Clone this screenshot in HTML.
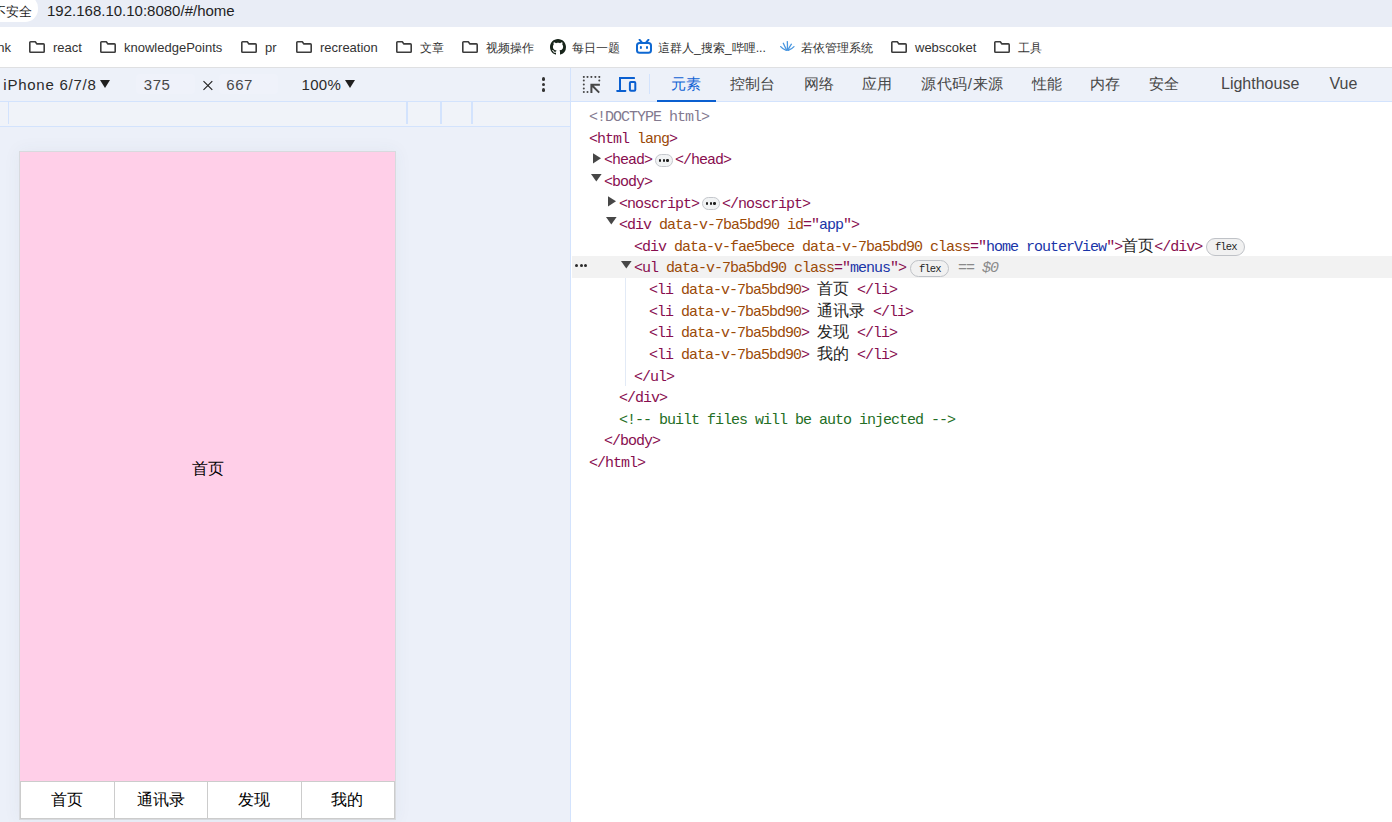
<!DOCTYPE html>
<html><head><meta charset="utf-8">
<style>
*{margin:0;padding:0;box-sizing:border-box}
html,body{width:1392px;height:822px;overflow:hidden;background:#fff;font-family:"Liberation Sans",sans-serif;color:#1f1f1f}
.a{position:absolute;white-space:pre}
#omni{position:absolute;left:0;top:0;width:1392px;height:27px;background:#e9edf6}
#pill{position:absolute;left:-30px;top:-5px;width:67.5px;height:26.5px;border-radius:13px;background:#fff}
#bm{position:absolute;left:0;top:27px;width:1392px;height:41px;background:#fff;border-bottom:1px solid #dfe0e2}
.bt{position:absolute;top:11px;font-size:13px;line-height:20px;color:#333}
.bt .cj{font-size:12.3px}
#dtb{position:absolute;left:0;top:68px;width:570px;height:34px;background:#edf1f9;border-bottom:1px solid #d3e3fd}
#ruler{position:absolute;left:0;top:102px;width:570px;height:25px;background:#f0f3f9;border-bottom:1px solid #d3e3fd}
#canvas{position:absolute;left:0;top:127px;width:570px;height:695px;background:#ecf0f9;overflow:hidden}
#vsplit{position:absolute;left:570px;top:68px;width:1px;height:754px;background:#d3e3fd}
#tabs{position:absolute;left:571px;top:68px;width:821px;height:34px;background:#edf1f9;border-bottom:1px solid #d3e3fd}
.tab{position:absolute;top:5.6px;font-size:15px;line-height:20px;color:#474747}
#code{position:absolute;left:571px;top:102px;width:821px;height:720px;background:#fff}
.ln{position:absolute;height:21.625px;line-height:21.625px;font-family:"Liberation Mono",monospace;font-size:15px;letter-spacing:-1px;white-space:pre;color:#880e4f}
.ln .cj{letter-spacing:0;font-size:16px}
.an{color:#9b4a08}.av{color:#1a35a8}.cm{color:#236e25}.tx{color:#1f1f1f}
.dt{color:#83798f}
.tri{position:absolute;width:0;height:0}
.badge{position:absolute;width:38.5px;height:17.5px;border:1px solid #bfc2c7;border-radius:9px;background:#f1f1f1;font-family:"Liberation Mono",monospace;font-size:10.5px;letter-spacing:-0.9px;text-indent:1px;line-height:16px;color:#1f1f1f;text-align:center}
.dtt{top:7px;font-size:15px;line-height:20px;color:#2a2a2a}
.rl{top:0;width:1.6px;height:21.7px;background:#d3e3fd}
.nav{top:663px;font-size:16px;line-height:20px;color:#000}
.ell{position:absolute;width:18px;height:12.8px;border:1px solid #c4c7cc;border-radius:6.4px;background:#f1f3f4;font-size:0;line-height:0;padding:4.2px 0 0 3.1px}
.ell i{display:inline-block;width:2.4px;height:2.4px;border-radius:1.2px;background:#1f1f1f;margin-right:1.3px;vertical-align:top}
.dot{display:inline-block;width:3px;height:3px;border-radius:1.5px;background:#2a2a2a;margin-right:1.5px;vertical-align:top}
.eq{color:#8a8a8a;font-style:italic}
</style></head><body>
<div id="omni"><div id="pill"></div>
<div class="a" style="left:-7px;top:3px;font-size:12.5px;line-height:18px;color:#1f1f1f">不安全</div>
<div class="a" style="left:47px;top:1.5px;font-size:15px;line-height:18px;color:#1f1f1f">192.168.10.10:8080/#/home</div>
</div>
<div id="bm">
<div class="a bt" style="left:-8.5px">link</div>
<svg class="a" style="left:29px;top:14px" width="16" height="12" viewBox="0 0 16 12"><path d="M0.8 1.6Q0.8 0.8 1.6 0.8H6.3L7.9 2.9H14.4Q15.2 2.9 15.2 3.7V10.4Q15.2 11.2 14.4 11.2H1.6Q0.8 11.2 0.8 10.4Z" fill="none" stroke="#3c3c3c" stroke-width="1.6" stroke-linejoin="round"/></svg>
<div class="a bt" style="left:53px">react</div>
<svg class="a" style="left:100px;top:14px" width="16" height="12" viewBox="0 0 16 12"><path d="M0.8 1.6Q0.8 0.8 1.6 0.8H6.3L7.9 2.9H14.4Q15.2 2.9 15.2 3.7V10.4Q15.2 11.2 14.4 11.2H1.6Q0.8 11.2 0.8 10.4Z" fill="none" stroke="#3c3c3c" stroke-width="1.6" stroke-linejoin="round"/></svg>
<div class="a bt" style="left:124px">knowledgePoints</div>
<svg class="a" style="left:241px;top:14px" width="16" height="12" viewBox="0 0 16 12"><path d="M0.8 1.6Q0.8 0.8 1.6 0.8H6.3L7.9 2.9H14.4Q15.2 2.9 15.2 3.7V10.4Q15.2 11.2 14.4 11.2H1.6Q0.8 11.2 0.8 10.4Z" fill="none" stroke="#3c3c3c" stroke-width="1.6" stroke-linejoin="round"/></svg>
<div class="a bt" style="left:265px">pr</div>
<svg class="a" style="left:296px;top:14px" width="16" height="12" viewBox="0 0 16 12"><path d="M0.8 1.6Q0.8 0.8 1.6 0.8H6.3L7.9 2.9H14.4Q15.2 2.9 15.2 3.7V10.4Q15.2 11.2 14.4 11.2H1.6Q0.8 11.2 0.8 10.4Z" fill="none" stroke="#3c3c3c" stroke-width="1.6" stroke-linejoin="round"/></svg>
<div class="a bt" style="left:320px">recreation</div>
<svg class="a" style="left:396px;top:14px" width="16" height="12" viewBox="0 0 16 12"><path d="M0.8 1.6Q0.8 0.8 1.6 0.8H6.3L7.9 2.9H14.4Q15.2 2.9 15.2 3.7V10.4Q15.2 11.2 14.4 11.2H1.6Q0.8 11.2 0.8 10.4Z" fill="none" stroke="#3c3c3c" stroke-width="1.6" stroke-linejoin="round"/></svg>
<div class="a bt" style="left:420px"><span class=cj>文章</span></div>
<svg class="a" style="left:462px;top:14px" width="16" height="12" viewBox="0 0 16 12"><path d="M0.8 1.6Q0.8 0.8 1.6 0.8H6.3L7.9 2.9H14.4Q15.2 2.9 15.2 3.7V10.4Q15.2 11.2 14.4 11.2H1.6Q0.8 11.2 0.8 10.4Z" fill="none" stroke="#3c3c3c" stroke-width="1.6" stroke-linejoin="round"/></svg>
<div class="a bt" style="left:486px"><span class=cj>视频操作</span></div>
<svg class="a" style="left:891px;top:14px" width="16" height="12" viewBox="0 0 16 12"><path d="M0.8 1.6Q0.8 0.8 1.6 0.8H6.3L7.9 2.9H14.4Q15.2 2.9 15.2 3.7V10.4Q15.2 11.2 14.4 11.2H1.6Q0.8 11.2 0.8 10.4Z" fill="none" stroke="#3c3c3c" stroke-width="1.6" stroke-linejoin="round"/></svg>
<div class="a bt" style="left:915px">webscoket</div>
<svg class="a" style="left:994px;top:14px" width="16" height="12" viewBox="0 0 16 12"><path d="M0.8 1.6Q0.8 0.8 1.6 0.8H6.3L7.9 2.9H14.4Q15.2 2.9 15.2 3.7V10.4Q15.2 11.2 14.4 11.2H1.6Q0.8 11.2 0.8 10.4Z" fill="none" stroke="#3c3c3c" stroke-width="1.6" stroke-linejoin="round"/></svg>
<div class="a bt" style="left:1018px"><span class=cj>工具</span></div>
<svg class="a" style="left:550px;top:12px" width="16" height="16" viewBox="0 0 16 16"><path fill="#17241a" d="M8 0C3.58 0 0 3.58 0 8c0 3.54 2.29 6.53 5.47 7.59.4.07.55-.17.55-.38 0-.19-.01-.82-.01-1.49-2.01.37-2.53-.49-2.69-.94-.09-.23-.48-.94-.82-1.130-.28-.15-.68-.52-.01-.53.63-.01 1.08.58 1.23.82.72 1.21 1.87.87 2.33.66.07-.52.28-.87.51-1.07-1.780-.2-3.64-.89-3.64-3.95 0-.87.31-1.59.82-2.15-.08-.2-.36-1.02.08-2.12 0 0 .67-.21 2.2.82.64-.18 1.32-.27 2-.27.68 0 1.36.09 2 .27 1.53-1.04 2.2-.82 2.2-.82.44 1.1.16 1.92.08 2.12.51.56.82 1.27.82 2.15 0 3.07-1.87 3.75-3.65 3.95.29.25.54.73.54 1.48 0 1.07-.01 1.93-.01 2.2 0 .21.15.46.55.38A8.013 8.013 0 0016 8c0-4.42-3.58-8-8-8z"/></svg>
<div class="a bt" style="left:572px"><span class=cj>每日一题</span></div>
<svg class="a" style="left:636px;top:12px" width="16" height="16" viewBox="0 0 16 16"><g fill="none" stroke="#0e68d2" stroke-width="2" stroke-linecap="round"><rect x="1" y="4" width="14" height="9.8" rx="2.6"/><path d="M3.6 0.8L5.6 3.2M12.4 0.8L10.4 3.2"/></g><g fill="#0e68d2"><rect x="3.9" y="7" width="2" height="3" rx="1"/><rect x="10" y="7" width="2" height="3" rx="1"/></g></svg>
<div class="a bt" style="left:658px"><span class=cj>這群人_搜索_哔哩...</span></div>
<svg class="a" style="left:780px;top:14px" width="15" height="10" viewBox="0 0 15 10"><g fill="none" stroke="#4a97e0" stroke-width="1.3" stroke-linecap="round"><path d="M7.3 9.2Q7.6 4 7.3 0.6"/><path d="M6.6 9Q5 6 3.3 2.3"/><path d="M8 9Q9.5 6 11.4 3.2"/><path d="M6.3 9.4Q3 8.4 0.7 5.6"/><path d="M8.3 9.4Q11.5 8.2 14 5.6"/></g></svg>
<div class="a bt" style="left:801px"><span class=cj>若依管理系统</span></div>
</div>
<div id="dtb">
<div class="a dtt" style="left:3.3px;letter-spacing:0.75px">iPhone 6/7/8</div>
<svg class="a" style="left:100px;top:12px" width="10" height="8" viewBox="0 0 10 8"><path d="M0 0H10L5 8Z" fill="#1f1f1f"/></svg>
<div class="a" style="left:136px;top:6px;width:59px;height:20px;border-radius:4px;background:#eff2fa"></div>
<div class="a" style="left:219px;top:6px;width:59px;height:20px;border-radius:4px;background:#eff2fa"></div>
<div class="a dtt" style="left:143.8px;color:#474747;letter-spacing:0.5px">375</div>
<svg class="a" style="left:202px;top:12px" width="12" height="11" viewBox="0 0 12 11"><path d="M1.5 1.2L10.3 9.8M10.3 1.2L1.5 9.8" stroke="#1f1f1f" stroke-width="1.15"/></svg>
<div class="a dtt" style="left:226.3px;color:#474747;letter-spacing:0.5px">667</div>
<div class="a dtt" style="left:301.5px;letter-spacing:0.3px">100%</div>
<svg class="a" style="left:345px;top:12px" width="10" height="8" viewBox="0 0 10 8"><path d="M0 0H10L5 8Z" fill="#1f1f1f"/></svg>
<div class="a" style="left:541.7px;top:9px;width:3.6px;height:3.6px;border-radius:2px;background:#333"></div>
<div class="a" style="left:541.7px;top:14.6px;width:3.6px;height:3.6px;border-radius:2px;background:#333"></div>
<div class="a" style="left:541.7px;top:20.3px;width:3.6px;height:3.6px;border-radius:2px;background:#333"></div>
</div>
<div id="ruler">
<div class="a rl" style="left:7.8px"></div>
<div class="a rl" style="left:406.2px"></div>
<div class="a rl" style="left:440.2px"></div>
<div class="a rl" style="left:471.2px"></div>
</div>
<div id="canvas">
<div class="a" style="left:19px;top:24px;width:377px;height:669px;background:#d8dade;box-shadow:0 0 16px 1px rgba(60,70,90,0.05)"></div>
<div class="a" style="left:20px;top:25px;width:375px;height:667px;background:#ffcfe8"></div>
<div class="a" style="left:191.5px;top:332px;font-size:16px;line-height:20px;color:#000">首页</div>
<div class="a" style="left:20px;top:654px;width:375px;height:38px;background:#fff;border:1px solid #ccc"></div>
<div class="a" style="left:114px;top:655px;width:1px;height:36px;background:#ccc"></div>
<div class="a" style="left:207px;top:655px;width:1px;height:36px;background:#ccc"></div>
<div class="a" style="left:301px;top:655px;width:1px;height:36px;background:#ccc"></div>
<div class="a nav" style="left:51px">首页</div>
<div class="a nav" style="left:137px">通讯录</div>
<div class="a nav" style="left:238px">发现</div>
<div class="a nav" style="left:331px">我的</div>
</div>
<div id="vsplit"></div>
<div id="tabs">
<svg class="a" style="left:11px;top:8px" width="20" height="18" viewBox="0 0 20 18"><g fill="#474747"><circle cx="1.8" cy="0.9" r="1"/><circle cx="5.5" cy="0.9" r="1"/><circle cx="9.4" cy="0.9" r="1"/><circle cx="13.4" cy="0.9" r="1"/><circle cx="17.3" cy="0.9" r="1"/><circle cx="17.3" cy="4.5" r="1"/><circle cx="1.8" cy="4.5" r="1"/><circle cx="1.8" cy="8.4" r="1"/><circle cx="1.8" cy="12.4" r="1"/><circle cx="1.8" cy="16.1" r="1"/><circle cx="5.5" cy="16.1" r="1"/></g><path d="M8.4 7.8H17.9V9.8H11.8L17.9 15.9L16.5 17.3L10.4 11.2V17H8.4Z" fill="#474747"/></svg>
<svg class="a" style="left:45px;top:8px" width="22" height="17" viewBox="0 0 22 17"><g fill="#0a5fd0"><rect x="3" y="1" width="16" height="2" rx="0.4"/><rect x="3" y="1" width="2" height="14"/><rect x="0.2" y="14" width="10.2" height="1.9" rx="0.8"/></g><rect x="13.9" y="5.9" width="5.4" height="8.9" rx="1" fill="none" stroke="#0a5fd0" stroke-width="2"/></svg>
<div class="a" style="left:78px;top:6.3px;width:1px;height:19.3px;background:#d3e3fd"></div>
<div class="a tab" style="left:100px;color:#1062d4">元素</div>
<div class="a" style="left:86px;top:32px;width:59px;height:2px;background:#0a5fd0"></div>
<div class="a tab" style="left:159px">控制台</div>
<div class="a tab" style="left:233px">网络</div>
<div class="a tab" style="left:291px">应用</div>
<div class="a tab" style="left:350px;letter-spacing:0.6px">源代码/来源</div>
<div class="a tab" style="left:461px">性能</div>
<div class="a tab" style="left:519px">内存</div>
<div class="a tab" style="left:578px">安全</div>
<div class="a tab" style="left:650px;font-size:16px;top:6px">Lighthouse</div>
<div class="a tab" style="left:758.5px;font-size:16px;top:6px">Vue</div>
</div>
<div id="code">
<div class="a" style="left:1px;top:154px;width:820px;height:21.6px;background:#f2f2f2"></div>
<div class="a" style="left:4px;top:162.4px;font-size:0;line-height:0"><i class="dot"></i><i class="dot"></i><i class="dot"></i></div>
<div class="a" style="left:54px;top:176px;width:1px;height:108px;background:#e2eaf6"></div>
<div class="ln" style="left:18px;top:5.100px"><span class=dt>&lt;!DOCTYPE html&gt;</span></div>
<div class="ln" style="left:18px;top:26.725px">&lt;html<span class=an> lang</span>&gt;</div>
<svg class="a" style="left:22.0px;top:50.85px" width="8" height="11" viewBox="0 0 8 11"><path d="M0 0.2L8 5.3L0 10.6Z" fill="#474747"/></svg>
<div class="ln" style="left:33px;top:48.350px">&lt;head&gt;</div>
<div class="ell" style="left:84px;top:51.95px"><i></i><i></i><i></i></div>
<div class="ln" style="left:104px;top:48.350px">&lt;/head&gt;</div>
<svg class="a" style="left:20.0px;top:72.07px" width="11" height="8" viewBox="0 0 11 8"><path d="M0 0H10.6L5.3 7.6Z" fill="#474747"/></svg>
<div class="ln" style="left:33px;top:69.975px">&lt;body&gt;</div>
<svg class="a" style="left:37.0px;top:94.10px" width="8" height="11" viewBox="0 0 8 11"><path d="M0 0.2L8 5.3L0 10.6Z" fill="#474747"/></svg>
<div class="ln" style="left:48px;top:91.600px">&lt;noscript&gt;</div>
<div class="ell" style="left:131px;top:95.20px"><i></i><i></i><i></i></div>
<div class="ln" style="left:151px;top:91.600px">&lt;/noscript&gt;</div>
<svg class="a" style="left:35.0px;top:115.32px" width="11" height="8" viewBox="0 0 11 8"><path d="M0 0H10.6L5.3 7.6Z" fill="#474747"/></svg>
<div class="ln" style="left:48px;top:113.225px">&lt;div<span class=an> data-v-7ba5bd90 id</span>="<span class=av>app</span>"&gt;</div>
<div class="ln" style="left:63px;top:134.850px">&lt;div<span class=an> data-v-fae5bece data-v-7ba5bd90 class</span>="<span class=av>home routerView</span>"&gt;<span class=tx><span class=cj>首页</span></span>&lt;/div&gt;</div>
<div class="badge" style="left:635px;top:136.35px">flex</div>
<svg class="a" style="left:50.0px;top:158.57px" width="11" height="8" viewBox="0 0 11 8"><path d="M0 0H10.6L5.3 7.6Z" fill="#474747"/></svg>
<div class="ln" style="left:63px;top:156.475px">&lt;ul<span class=an> data-v-7ba5bd90 class</span>="<span class=av>menus</span>"&gt;</div>
<div class="badge" style="left:339px;top:157.97px">flex</div>
<div class="ln eq" style="left:387px;top:156.475px">== $0</div>
<div class="ln" style="left:78px;top:178.100px">&lt;li<span class=an> data-v-7ba5bd90</span>&gt;<span class=tx> <span class=cj>首页</span> </span>&lt;/li&gt;</div>
<div class="ln" style="left:78px;top:199.725px">&lt;li<span class=an> data-v-7ba5bd90</span>&gt;<span class=tx> <span class=cj>通讯录</span> </span>&lt;/li&gt;</div>
<div class="ln" style="left:78px;top:221.350px">&lt;li<span class=an> data-v-7ba5bd90</span>&gt;<span class=tx> <span class=cj>发现</span> </span>&lt;/li&gt;</div>
<div class="ln" style="left:78px;top:242.975px">&lt;li<span class=an> data-v-7ba5bd90</span>&gt;<span class=tx> <span class=cj>我的</span> </span>&lt;/li&gt;</div>
<div class="ln" style="left:63px;top:264.600px">&lt;/ul&gt;</div>
<div class="ln" style="left:48px;top:286.225px">&lt;/div&gt;</div>
<div class="ln" style="left:48px;top:307.850px"><span class=cm>&lt;!-- built files will be auto injected --&gt;</span></div>
<div class="ln" style="left:33px;top:329.475px">&lt;/body&gt;</div>
<div class="ln" style="left:18px;top:351.100px">&lt;/html&gt;</div>
</div>
</body></html>
